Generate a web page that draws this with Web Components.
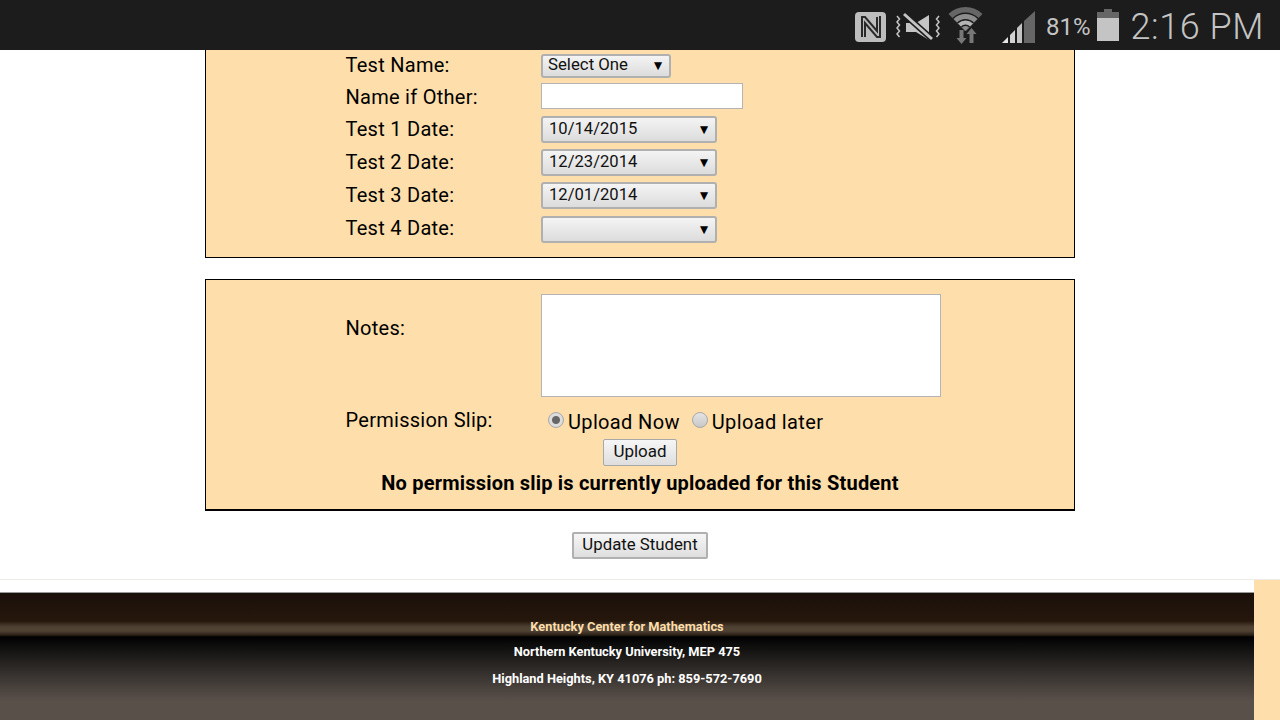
<!DOCTYPE html>
<html>
<head>
<meta charset="utf-8">
<title>Update Student</title>
<style>
  html, body { margin: 0; padding: 0; height: 720px; overflow: hidden; background: #fff; }
  body { font-family: Roboto, "Liberation Sans", sans-serif; color: #000; }
</style>
</head>
<body>
<status-bar></status-bar>
<form-area>
  <form-panel class="first">
    <form-row label="Test Name:" gap="4" height="24" up="3"><fake-select width="130" height="24" small>Select One</fake-select></form-row>
    <form-row label="Name if Other:" gap="5" height="26" down="1"><text-box width="202" height="26"></text-box></form-row>
    <form-row label="Test 1 Date:" gap="7" height="27" up="2"><fake-select width="176" height="27">10/14/2015</fake-select></form-row>
    <form-row label="Test 2 Date:" gap="6" height="27" up="2"><fake-select width="176" height="27">12/23/2014</fake-select></form-row>
    <form-row label="Test 3 Date:" gap="6" height="27" up="2"><fake-select width="176" height="27">12/01/2014</fake-select></form-row>
    <form-row label="Test 4 Date:" gap="7" height="27" up="4"><fake-select width="176" height="27"></fake-select></form-row>
  </form-panel>
  <form-panel class="second">
    <form-row label="Notes:" height="103" top down="22"><text-box width="400" height="103"></text-box></form-row>
    <form-row label="Permission Slip:" gap="11" height="31" top><radio-pair></radio-pair></form-row>
    <center-line><app-button>Upload</app-button></center-line>
    <strong-line>No permission slip is currently uploaded for this Student</strong-line>
  </form-panel>
  <center-line class="update"><app-button large>Update Student</app-button></center-line>
</form-area>
<site-footer></site-footer>

<script>
class StatusBar extends HTMLElement {
  constructor() {
    super();
    this.attachShadow({ mode: "open" });
    this.shadowRoot.innerHTML = `
      <style>
        :host { display: flex; align-items: center; justify-content: flex-end; height: 50px; background: #1c1c1c; color: #c4c4c4; padding-right: 16px; box-sizing: border-box; position: relative; z-index: 2; }
        svg { display: block; flex: none; }
        .pct { font-size: 24px; margin: 3px 6px 0 10px; }
        .time { font-size: 36px; font-weight: 300; margin: 3px 0 0 12px; letter-spacing: 0.55px; }
      </style>
      <svg width="134" height="44" viewBox="0 0 134 44">
        <defs><clipPath id="fan"><path d="M114.5 28L90 3.500h49z"/></clipPath></defs>
        <!-- nfc -->
        <rect x="4" y="9" width="31" height="30" rx="4" fill="#bdbdbd"/>
        <path d="M11 34V14h3l12 14V14M29 13v21h-3L14 20v14" fill="none" stroke="#2a2a2a" stroke-width="2"/>
        <!-- mute -->
        <path d="M46 13l2.500 3-2.500 3 2.500 3-2.500 3 2.500 3-2.500 3 2.500 3M88 13l-2.500 3 2.500 3-2.500 3 2.500 3-2.500 3 2.500 3-2.500 3" fill="none" stroke="#c4c4c4" stroke-width="1.5"/>
        <path d="M55 20h10l13-8v25l-13-8h-10z" fill="#c4c4c4"/>
        <path d="M52 10l30 27" stroke="#1c1c1c" stroke-width="6"/>
        <path d="M53 11l28 25" stroke="#c4c4c4" stroke-width="3"/>
        <!-- wifi -->
        <g clip-path="url(#fan)">
          <circle cx="114.500" cy="28" r="24" fill="#666"/>
          <circle cx="114.500" cy="28" r="18.500" fill="#1c1c1c"/>
          <circle cx="114.500" cy="28" r="17" fill="#8d8d8d"/>
          <circle cx="114.500" cy="28" r="12" fill="#1c1c1c"/>
          <circle cx="114.500" cy="28" r="10.500" fill="#b5b5b5"/>
          <circle cx="114.500" cy="28" r="6.500" fill="#1c1c1c"/>
          <circle cx="114.500" cy="28" r="5" fill="#8d8d8d"/>
        </g>
        <path d="M108.500 27h4v8h3l-5 6-5-6h3zM118.500 40v-9h-3l5-6 5 6h-3v9z" fill="#777"/>
      </svg>
      <svg width="36" height="34" viewBox="0 0 36 34" style="margin: 4px 0 0 15px">
        <path d="M2 33l6-6v6z" fill="#e6e6e6"/>
        <path d="M10 25l5-5v13h-5z" fill="#d2d2d2"/>
        <path d="M17 18l5-5v20h-5z" fill="#c4c4c4"/>
        <path d="M24 11l11-10v32h-11z" fill="#666"/>
      </svg>
      <span class="pct">81%</span>
      <svg width="22" height="34" viewBox="0 0 22 34" style="margin-top: 2px">
        <rect x="7" y="0" width="8" height="4" fill="#666"/>
        <rect x="0" y="3" width="22" height="6" fill="#666"/>
        <rect x="0" y="9" width="22" height="23" fill="#c4c4c4"/>
      </svg>
      <span class="time">2:16 PM</span>`;
  }
}

class FormArea extends HTMLElement {
  constructor() {
    super();
    this.attachShadow({ mode: "open" });
    this.shadowRoot.innerHTML = `
      <style>
        :host { display: flex; flex-direction: column; align-items: center; height: 530px; box-sizing: border-box; border-bottom: 1px solid #eeeae6; }
      </style>
      <slot></slot>`;
  }
}

class FormPanel extends HTMLElement {
  constructor() {
    super();
    this.attachShadow({ mode: "open" });
    this.shadowRoot.innerHTML = `
      <style>
        :host { display: block; width: 870px; box-sizing: border-box; background: #fedeaa; border: 1px solid #000; padding-left: 140px; }
        :host(.first) { border-top: 0; height: 208px; margin-bottom: 21px; }
        :host(.second) { height: 232px; padding-top: 14px; border-bottom-width: 2px; margin-bottom: 21px; }
      </style>
      <slot></slot>`;
  }
}

class FormRow extends HTMLElement {
  constructor() {
    super();
    this.attachShadow({ mode: "open" });
    this.shadowRoot.innerHTML = `
      <style>
        :host { display: flex; align-items: center; font-size: 20px; letter-spacing: 0.27px; }
        :host([top]) { align-items: flex-start; }
        .label { width: 195.500px; margin-left: -0.500px; flex: none; box-sizing: border-box; }
      </style>
      <span class="label"></span><slot></slot>`;
  }
  connectedCallback() {
    this.style.height = this.getAttribute("height") + "px";
    this.style.marginTop = (this.getAttribute("gap") || 0) + "px";
    const label = this.shadowRoot.querySelector(".label");
    label.textContent = this.getAttribute("label");
    label.style.paddingTop = (this.getAttribute("down") || 0) + "px";
    label.style.paddingBottom = (this.getAttribute("up") || 0) + "px";
  }
}

class FakeSelect extends HTMLElement {
  constructor() {
    super();
    this.attachShadow({ mode: "open" });
    this.shadowRoot.innerHTML = `
      <style>
        :host { display: flex; align-items: center; justify-content: space-between; box-sizing: border-box; border: 2px solid #b0b0b0; border-radius: 3px; background: linear-gradient(#f4f4f4, #dcdcdc); font-size: 16.600px; letter-spacing: 0; padding: 0 6px; color: #111; }
        .arrow { font-size: 10.500px; font-family: "DejaVu Sans", sans-serif; color: #000; position: relative; top: -1px; margin-right: 1px; }
        :host([small]) { font-size: 16.800px; padding: 0 5px; }
        :host([small]) .arrow { margin-right: 2px; }
        :host([small]) .txt { top: -2px; }
        .txt { position: relative; top: -1px; }
      </style>
      <span class="txt"><slot></slot></span><span class="arrow">▼</span>`;
  }
  connectedCallback() {
    this.style.width = this.getAttribute("width") + "px";
    this.style.height = this.getAttribute("height") + "px";
  }
}

class TextBox extends HTMLElement {
  constructor() {
    super();
    this.attachShadow({ mode: "open" });
    this.shadowRoot.innerHTML = `
      <style>
        :host { display: block; box-sizing: border-box; background: #fff; border: 1px solid #b4b4b4; }
      </style>`;
  }
  connectedCallback() {
    this.style.width = this.getAttribute("width") + "px";
    this.style.height = this.getAttribute("height") + "px";
  }
}

class RadioPair extends HTMLElement {
  constructor() {
    super();
    this.attachShadow({ mode: "open" });
    this.shadowRoot.innerHTML = `
      <style>
        :host { display: flex; align-items: center; padding: 2px 0 0 7px; height: 24px; font-size: 20px; letter-spacing: 0.35px; }
        .dot { width: 16px; height: 16px; box-sizing: border-box; border-radius: 50%; border: 1px solid #a8a8a8; background: linear-gradient(#e4e4e4, #c8c8c8); margin-right: 4px; position: relative; top: -2px; flex: none; }
        .dot.on { background: radial-gradient(circle, #666 0 3.500px, #dcdcdc 4.500px); }
        .gap { width: 12px; }
      </style>
      <span class="dot on"></span><span>Upload Now</span><span class="gap"></span>
      <span class="dot"></span><span>Upload later</span>`;
  }
}

class CenterLine extends HTMLElement {
  constructor() {
    super();
    this.attachShadow({ mode: "open" });
    this.shadowRoot.innerHTML = `
      <style>
        :host { display: flex; justify-content: center; margin-left: -140px; height: 27px; }
        :host(.update) { margin: 0; }
      </style>
      <slot></slot>`;
  }
}

class StrongLine extends HTMLElement {
  constructor() {
    super();
    this.attachShadow({ mode: "open" });
    this.shadowRoot.innerHTML = `
      <style>
        :host { display: block; margin: 3px 0 0 -140px; text-align: center; font-size: 20px; letter-spacing: 0.2px; font-weight: 700; line-height: 28px; }
      </style>
      <slot></slot>`;
  }
}

class AppButton extends HTMLElement {
  constructor() {
    super();
    this.attachShadow({ mode: "open" });
    this.shadowRoot.innerHTML = `
      <style>
        :host { display: flex; align-items: center; box-sizing: border-box; height: 27px; padding: 0 9px; border: 1px solid #a8a8a8; border-radius: 2px; background: linear-gradient(#f6f6f6, #dedede); font-size: 17px; color: #111; }
        :host([large]) { font-size: 16.800px; border-width: 2px; border-color: #b0b0b0; padding: 0 8px; }
        span { position: relative; top: -2px; }
      </style>
      <span><slot></slot></span>`;
  }
}

class SiteFooter extends HTMLElement {
  constructor() {
    super();
    this.attachShadow({ mode: "open" });
    this.shadowRoot.innerHTML = `
      <style>
        :host { display: grid; grid-template-columns: 1254px 26px; height: 140px; }
        .side { background: #fedeaa; }
        .left { padding-top: 12px; background: #fff; }
        .bar { height: 128px; box-sizing: border-box; border-top: 1px solid #999; text-align: center; font-size: 12.800px; font-weight: 700; color: #fff; padding-top: 25px;
          background: linear-gradient(#1a100a 0, #26170c 28px, #4f4233 34px, #4f4233 38px, #2a2118 42px, #000 44px, #0a0a0a 50px, #3a3531 84px, #5a504a 108px, #5a504a 100%); }
        .bar div { height: 27px; line-height: 18px; }
        .bar .gold { color: #fedeaa; height: 25px; }
      </style>
      <div class="left"><div class="bar">
        <div class="gold">Kentucky Center for Mathematics</div>
        <div>Northern Kentucky University, MEP 475</div>
        <div>Highland Heights, KY 41076 ph: 859-572-7690</div>
      </div></div>
      <div class="side"></div>`;
  }
}

customElements.define("status-bar", StatusBar);
customElements.define("form-area", FormArea);
customElements.define("form-panel", FormPanel);
customElements.define("form-row", FormRow);
customElements.define("fake-select", FakeSelect);
customElements.define("text-box", TextBox);
customElements.define("radio-pair", RadioPair);
customElements.define("center-line", CenterLine);
customElements.define("strong-line", StrongLine);
customElements.define("app-button", AppButton);
customElements.define("site-footer", SiteFooter);
</script>
</body>
</html>
